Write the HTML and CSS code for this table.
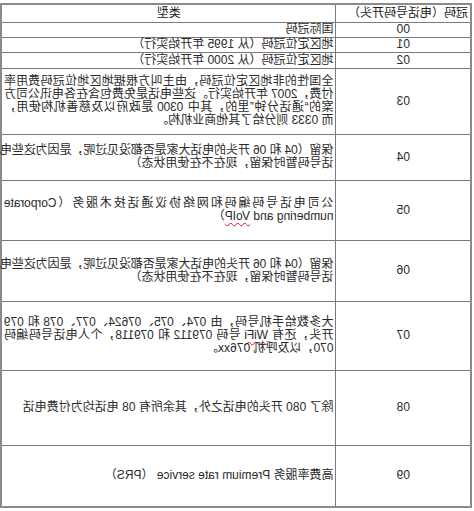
FILE: index.html
```html
<!DOCTYPE html>
<html lang="zh-CN">
<head>
<meta charset="utf-8">
<title>冠码</title>
<link rel="stylesheet" href="styles.css">
</head>
<body>
<div class="mirror">
  <table class="codes">
    <colgroup><col class="c-code"><col class="c-type"></colgroup>
    <tr class="r-head"><th class="h-code">冠码（电话号码开头）</th><th class="h-type">类型</th></tr>
    <tr class="r-s"><td class="code">00</td><td class="type">国际冠码</td></tr>
    <tr class="r-s"><td class="code">01</td><td class="type">地区定位冠码（从 1995 年开始实行）</td></tr>
    <tr class="r-s2"><td class="code">02</td><td class="type">地区定位冠码（从 2000 年开始实行）</td></tr>
    <tr class="r-03"><td class="code">03</td><td class="type lh15">
      <span class="ln">全国性的非地区定位冠码，由主叫方根据地区地位冠码费用率</span>
      <span class="ln">付费，2007 年开始实行。这些电话是免费包含在各电讯公司方</span>
      <span class="ln">案的“通话分钟”里的，其中 0300 是政府以及慈善机构使用，</span>
      <span class="ln last">而 0333 则分给了其他商业机构。</span>
    </td></tr>
    <tr class="r-04"><td class="code">04</td><td class="type lh20">
      <span class="ln">保留（04 和 06 开头的电话大家是否都没见过呢，是因为这些电</span>
      <span class="ln last">话号码暂时保留，现在不在使用状态）</span>
    </td></tr>
    <tr class="r-05"><td class="code">05</td><td class="type lh24">
      <span class="ln">公司电话号码编码和网络协议通话技术服务（Corporate</span>
      <span class="ln last">numbering and <span class="spell">VoIP</span>）</span>
    </td></tr>
    <tr class="r-06"><td class="code">06</td><td class="type lh20">
      <span class="ln">保留（04 和 06 开头的电话大家是否都没见过呢，是因为这些电</span>
      <span class="ln last">话号码暂时保留，现在不在使用状态）</span>
    </td></tr>
    <tr class="r-07"><td class="code">07</td><td class="type lh21">
      <span class="ln">大多数给手机号码，由 074、075、07624、077、078 和 079</span>
      <span class="ln">开头，还有 <span class="spell">WiFi</span> 号码 079112 和 079118，个人电话号码编码</span>
      <span class="ln last">070，以及呼机 076xx。</span>
    </td></tr>
    <tr class="r-08"><td class="code">08</td><td class="type">除了 080 开头的电话之外，其余所有 08 电话均为付费电话</td></tr>
    <tr class="r-09"><td class="code">09</td><td class="type">高费率服务 Premium rate service （PRS）</td></tr>
  </table>
</div>
</body>
</html>
```

FILE: styles.css
```css
html, body {
  margin: 0;
  padding: 0;
  background: #ffffff;
}

.mirror {
  width: 474px;
  height: 511px;
  transform: scaleX(-1);
  padding-top: 3px;
  box-sizing: border-box;
  overflow: hidden;
}

.codes {
  margin-left: 2px;
  width: 470px;
  table-layout: fixed;
  border-collapse: collapse;
  border: 2px solid #8a8a8a;
  font-family: "Liberation Sans", "Noto Sans CJK SC", sans-serif;
  font-size: 12px;
  color: #2a2a2a;
}

.c-code { width: 135px; }
.c-type { width: 335px; }

.codes th,
.codes td {
  border: 1px solid #7a7a7a;
  padding: 0 2px 0 2px;
  vertical-align: middle;
  line-height: 13px;
  white-space: nowrap;
}

.codes th {
  font-weight: normal;
  color: #1a1a1a;
}

.h-code { text-align: left; }
.h-type { text-align: center; }

.code { text-align: center; }
.type { text-align: left; }

.r-head { height: 18px; }
.r-s { height: 15px; }
.r-s2 { height: 16px; }
.r-03 { height: 66px; }
.r-04 { height: 46px; }
.r-05 { height: 60px; }
.r-06 { height: 61px; }
.r-07 { height: 69px; }
.r-08 { height: 75px; }
.r-09 { height: 62px; }

.lh15 { line-height: 15px; }
.lh20 { line-height: 20px; }
.lh21 { line-height: 21px; }
.lh24 { line-height: 24px; }

.ln {
  display: block;
  text-align: justify;
  text-align-last: justify;
  letter-spacing: -0.1px;
}

.ln.last {
  text-align-last: left;
  letter-spacing: 0;
}

.spell {
  text-decoration: underline wavy #d02020;
  text-decoration-thickness: 1px;
  text-underline-offset: 2px;
}
```
